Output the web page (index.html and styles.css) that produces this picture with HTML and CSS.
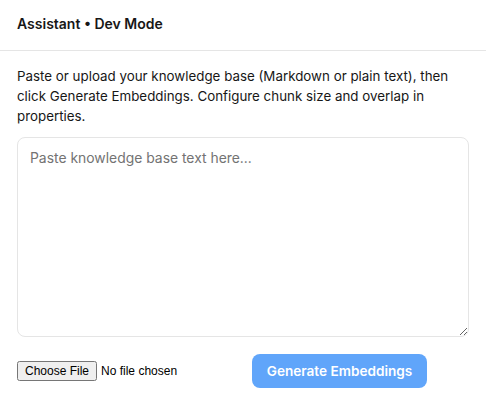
FILE: index.html
```html
<!DOCTYPE html>
<html lang="en">
<head>
<meta charset="utf-8">
<title>Assistant • Dev Mode</title>
<link rel="stylesheet" href="styles.css">
</head>
<body>
<header class="header">Assistant • Dev Mode</header>
<main class="content">
  <p class="intro">Paste or upload your knowledge base (Markdown or plain text), then click Generate Embeddings. Configure chunk size and overlap in properties.</p>
  <textarea class="kb" placeholder="Paste knowledge base text here..."></textarea>
  <div class="actions">
    <input class="file" type="file">
    <button class="generate" type="button" disabled>Generate Embeddings</button>
  </div>
</main>
</body>
</html>
```
FILE: styles.css
```css
* { box-sizing: border-box; }
html, body { margin: 0; background: #ffffff; }
body {
  font-family: Inter, "Noto Sans", "Liberation Sans", sans-serif;
  color: #171717;
  font-size: 14px;
  line-height: 20px;
}
.header {
  height: 51px;
  padding: 14px 17px;
  font-weight: 600;
  font-size: 14px;
  border-bottom: 1px solid #e5e5e5;
}
.content {
  padding: 15px 17px;
}
.intro {
  margin: 0 0 11px;
  font-size: 13.35px;
  line-height: 20px;
}
.kb {
  display: block;
  width: 100%;
  height: 200px;
  padding: 10px 12px;
  border: 1px solid #e5e5e5;
  border-radius: 8px;
  font-family: inherit;
  font-size: 13.9px;
  line-height: 20px;
  color: #171717;
  resize: vertical;
  outline: none;
}
.kb::placeholder { color: #737373; }
.actions {
  margin-top: 17px;
  display: flex;
  gap: 8px;
  align-items: center;
}
.file {
  font-family: "Liberation Sans", Arial, sans-serif;
  font-size: 12px;
  color: #000;
}
.generate {
  width: 175px;
  height: 34px;
  padding: 0;
  border: none;
  border-radius: 8px;
  background: #60a5fa;
  color: #ffffff;
  font-family: inherit;
  font-size: 13.6px;
  font-weight: 600;
}
```
